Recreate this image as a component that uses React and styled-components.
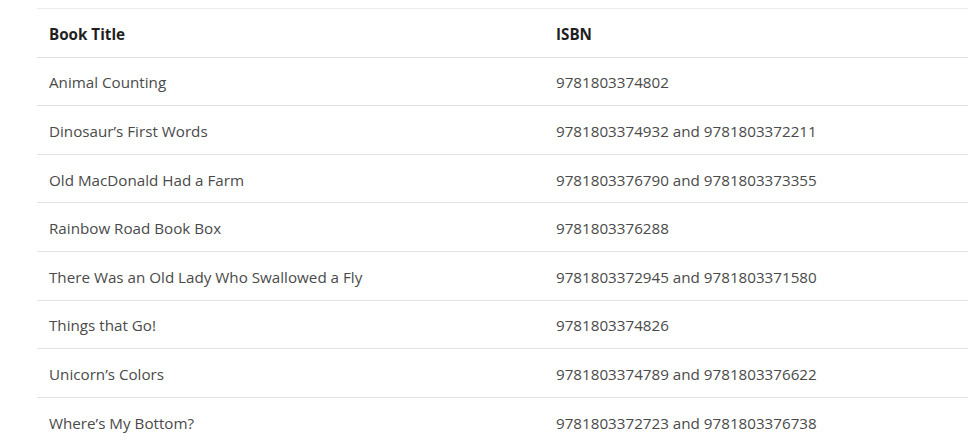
import React from "react";
import styled, { createGlobalStyle } from "styled-components";

const Global = createGlobalStyle`
  html, body { margin: 0; padding: 0; background: #ffffff; }
  body { font-family: "Open Sans", "Liberation Sans", sans-serif; }
`;

const Page = styled.div`
  padding: 8px 12px 0 37px;
`;

const Table = styled.div`
  width: 931px;
  border-top: 1px solid #ececec;
`;

const Row = styled.div`
  display: grid;
  grid-template-columns: 507px 424px;
  height: 48.6px;
  box-sizing: border-box;
  border-bottom: 1px solid #e3e3e3;
  align-items: center;
`;

const Cell = styled.div`
  padding: 2px 12px 0;
  font-size: 15.2px;
  line-height: 20px;
  color: ${(p) => (p.$head ? "#1f1f1f" : "#4a4a4a")};
  font-weight: ${(p) => (p.$head ? 700 : 400)};
  white-space: nowrap;
`;

const rows = [
  ["Animal Counting", "9781803374802"],
  ["Dinosaur’s First Words", "9781803374932 and 9781803372211"],
  ["Old MacDonald Had a Farm", "9781803376790 and 9781803373355"],
  ["Rainbow Road Book Box", "9781803376288"],
  ["There Was an Old Lady Who Swallowed a Fly", "9781803372945 and 9781803371580"],
  ["Things that Go!", "9781803374826"],
  ["Unicorn’s Colors", "9781803374789 and 9781803376622"],
  ["Where’s My Bottom?", "9781803372723 and 9781803376738"],
];

export default function App() {
  return (
    <>
      <Global />
      <Page>
        <Table>
          <Row>
            <Cell $head>Book Title</Cell>
            <Cell $head>ISBN</Cell>
          </Row>
          {rows.map(([t, i]) => (
            <Row key={t}>
              <Cell>{t}</Cell>
              <Cell>{i}</Cell>
            </Row>
          ))}
        </Table>
      </Page>
    </>
  );
}
